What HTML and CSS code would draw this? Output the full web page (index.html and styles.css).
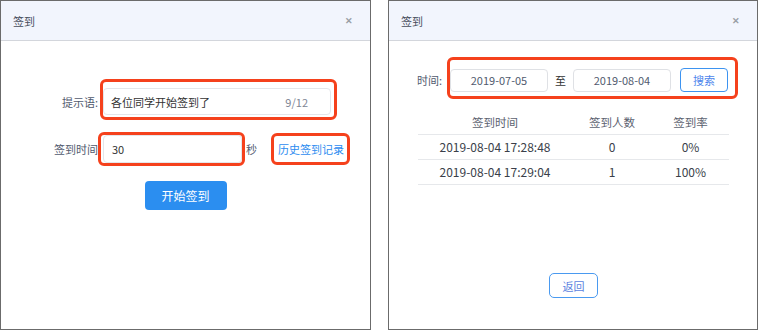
FILE: index.html
```html
<!DOCTYPE html>
<html lang="zh-CN">
<head>
<meta charset="utf-8">
<title>签到</title>
<link rel="stylesheet" href="styles.css">
</head>
<body>
<div class="page">
  <section class="modal modal-left">
    <header class="modal-head">
      <span class="title">签到</span>
      <span class="close">✕</span>
    </header>
    <div class="modal-body left-body">
      <div class="form-row">
        <span class="lbl">提示语:</span>
        <div class="field field-wide mark mark-a">
          <span class="val">各位同学开始签到了</span>
          <span class="count">9/12</span>
        </div>
      </div>
      <div class="form-row row-2">
        <span class="lbl">签到时间</span>
        <div class="field field-short mark mark-b">
          <span class="val">30</span>
        </div>
        <span class="unit">秒</span>
        <a class="link mark mark-c">历史签到记录</a>
      </div>
      <div class="btn-row">
        <button class="btn-primary">开始签到</button>
      </div>
    </div>
  </section>

  <section class="modal modal-right">
    <header class="modal-head">
      <span class="title">签到</span>
      <span class="close">✕</span>
    </header>
    <div class="modal-body right-body">
      <div class="search-row">
        <span class="lbl-time">时间:</span>
        <div class="search-group mark mark-d">
          <div class="date">2019-07-05</div>
          <span class="to">至</span>
          <div class="date">2019-08-04</div>
          <button class="btn-ghost">搜索</button>
        </div>
      </div>
      <table class="records">
        <thead>
          <tr><th class="c1">签到时间</th><th class="c2">签到人数</th><th class="c3">签到率</th></tr>
        </thead>
        <tbody>
          <tr><td>2019-08-04 17:28:48</td><td>0</td><td>0%</td></tr>
          <tr><td>2019-08-04 17:29:04</td><td>1</td><td>100%</td></tr>
        </tbody>
      </table>
      <div class="back-row">
        <button class="btn-back">返回</button>
      </div>
    </div>
  </section>
</div>
</body>
</html>
```

FILE: styles.css
```css
* { box-sizing: border-box; }

body {
  margin: 0;
  background: #ffffff;
  font-family: "Noto Sans CJK SC", "Noto Sans", sans-serif;
  font-size: 11px;
  color: #515a6e;
}

.page {
  display: flex;
  gap: 17px;
  height: 331px;
}

.modal {
  height: 330px;
  border: 1px solid #6b6b6b;
  background: #fff;
  display: flex;
  flex-direction: column;
}

.modal-left { width: 371px; }
.modal-right { width: 370px; }

.modal-head {
  height: 40px;
  flex: none;
  background: #f2f5fd;
  border-bottom: 1px solid #d3d6dc;
  display: flex;
  align-items: center;
  justify-content: space-between;
  padding: 0 17px 0 12px;
}

.title {
  font-size: 11px;
  color: #464c5b;
}

.close {
  font-size: 9px;
  color: #9a9ea6;
  font-weight: bold;
}

.modal-body {
  flex: 1;
  display: flex;
  flex-direction: column;
}

/* left form */
.left-body { padding-top: 47px; }

.form-row {
  display: flex;
  align-items: center;
}

.row-2 { margin-top: 20px; }

.lbl {
  width: 97px;
  margin-right: 5px;
  text-align: right;
  color: #515a6e;
}

.field {
  height: 27px;
  border: 1px solid #e4e6ea;
  border-radius: 4px;
  display: flex;
  align-items: center;
  padding: 0 7px;
  color: #333;
  background: #fff;
}

.field-wide {
  width: 228px;
  justify-content: space-between;
  padding-right: 22px;
}

.field-short {
  width: 139px;
  height: 28px;
  padding-left: 8px;
}

.count { color: #808695; }

.unit {
  margin-left: 4px;
  color: #515a6e;
}

.link {
  margin-left: 21px;
  color: #2d8cf0;
  cursor: pointer;
}

.btn-row {
  display: flex;
  justify-content: center;
  margin-top: 18px;
}

.btn-primary {
  width: 82px;
  height: 29px;
  border: none;
  border-radius: 4px;
  background: #2b8ef0;
  color: #fff;
  font-family: inherit;
  font-size: 12px;
}

/* annotation boxes */
.mark { position: relative; }

.mark::after {
  content: "";
  position: absolute;
  border: 3px solid #f5411c;
  border-radius: 6px;
  pointer-events: none;
}

.mark-a::after { top: -10px; left: -4px; right: -7px; bottom: -6px; }
.mark-b::after { top: -4px; left: -6px; right: -4px; bottom: -4px; }
.mark-c::after { top: -8px; left: -7px; right: -6px; bottom: -8px; }
.mark-d::after { top: -11px; left: -3px; right: -10px; bottom: -7px; }

/* right panel */
.right-body {
  padding: 27px 28px 31px 29px;
}

.search-row {
  display: flex;
  align-items: center;
}

.lbl-time {
  width: 25px;
  margin-right: 8px;
  white-space: nowrap;
  margin-left: -1px;
  color: #515a6e;
}

.search-group {
  display: flex;
  align-items: center;
}

.date {
  width: 98px;
  height: 23px;
  border: 1px solid #dfe1e5;
  border-radius: 4px;
  display: flex;
  align-items: center;
  justify-content: center;
  color: #515a6e;
}

.to {
  width: 11px;
  margin: 0 7px;
  color: #333;
}

.btn-ghost {
  width: 48px;
  height: 24px;
  margin-left: 9px;
  border: 1px solid #3d93f0;
  border-radius: 4px;
  background: #fff;
  color: #4d86ec;
  font-family: inherit;
  font-size: 11px;
}

.records {
  width: 100%;
  margin-top: 18px;
  border-collapse: collapse;
  table-layout: fixed;
}

.records th,
.records td {
  padding: 0;
  text-align: center;
  font-weight: normal;
  border-bottom: 1px solid #e6e8eb;
}

.records th {
  height: 24px;
  color: #5c6270;
  font-size: 11.5px;
}

.records td {
  height: 25px;
  color: #3a3f4a;
  font-size: 12px;
}

.c1 { width: 154px; }
.c2 { width: 80px; }
.c3 { width: 77px; }

.back-row {
  margin-top: auto;
  display: flex;
  justify-content: center;
}

.btn-back {
  width: 49px;
  height: 25px;
  border: 1px solid #4a9af0;
  border-radius: 5px;
  background: #fff;
  color: #5b7fe0;
  font-family: inherit;
  font-size: 11px;
}
```
